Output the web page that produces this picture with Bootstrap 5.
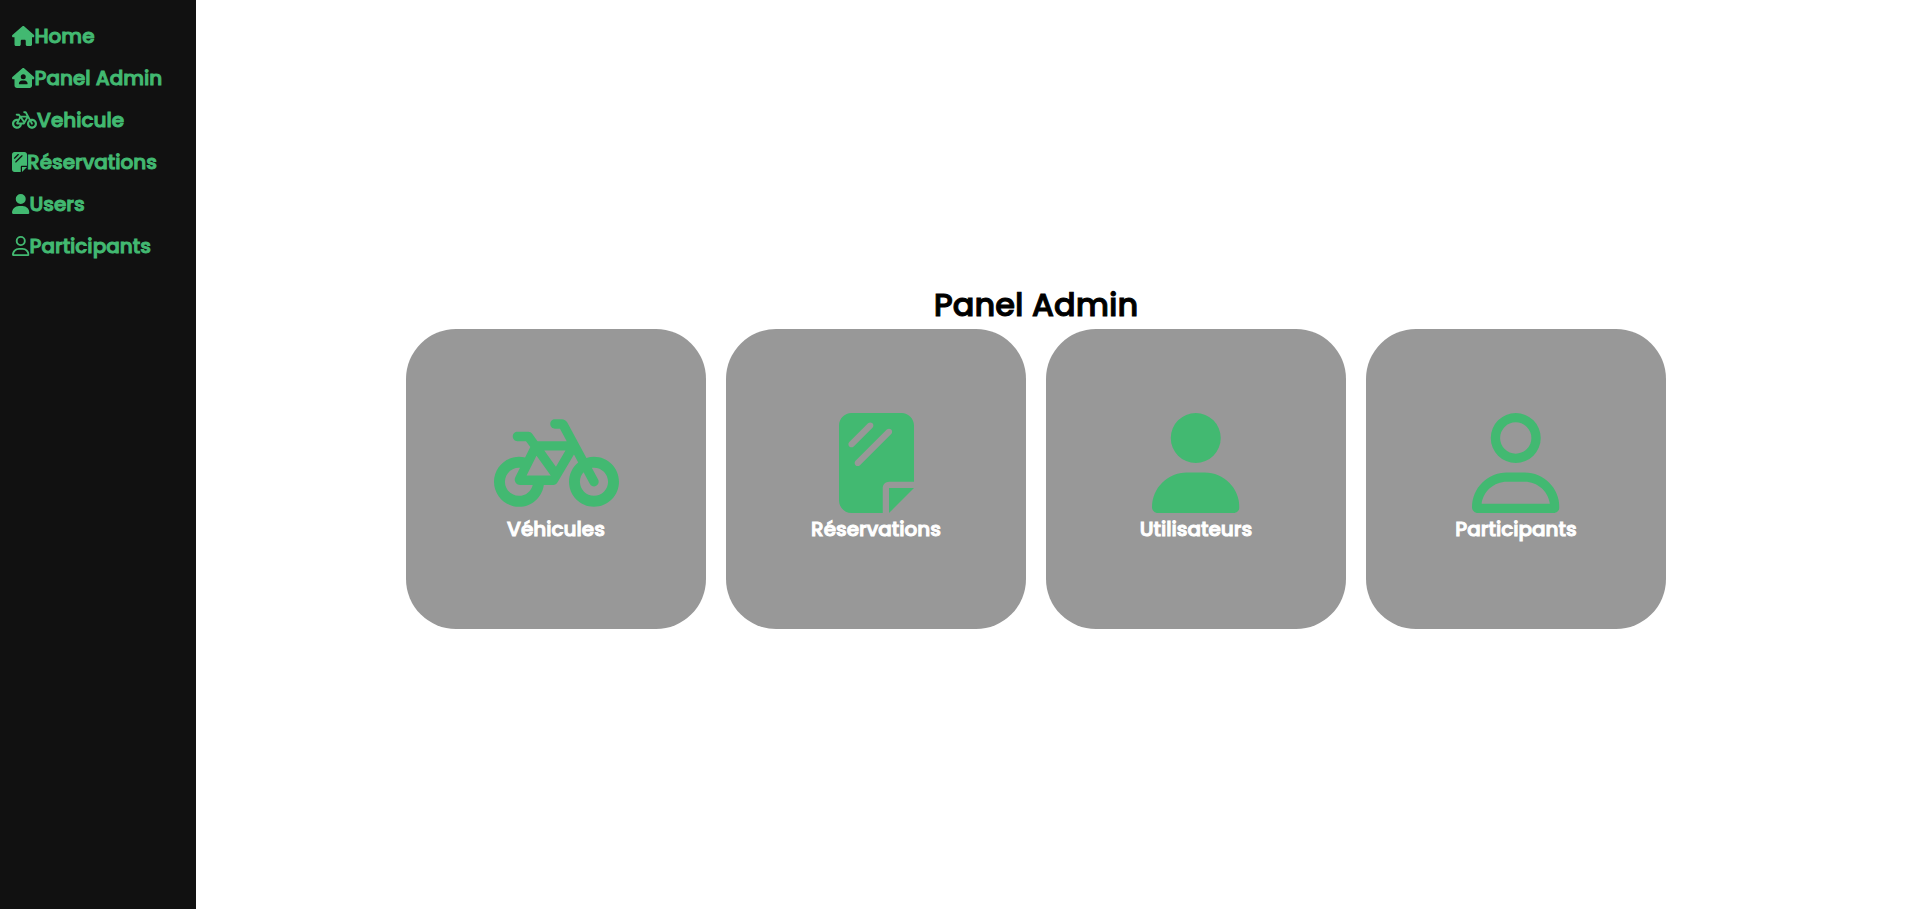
<!DOCTYPE html>
<html lang="fr">
<head>
<meta charset="utf-8">
<meta name="viewport" content="width=device-width, initial-scale=1">
<title>Panel Admin</title>
<link href="https://cdn.jsdelivr.net/npm/bootstrap@5.3.0/dist/css/bootstrap.min.css" rel="stylesheet">
<style>
  body { font-family: Poppins, Inter, sans-serif; background: #fff; color: #000; }
  .sidebar { width: 196px; background: #111; padding-top: 15px; }
  .sidebar a { color: #42b971; font-size: 20px; line-height: 30px; padding: 6px 12px; white-space: nowrap; }
  .sidebar a, .content h1, .tile { font-weight: 500; -webkit-text-stroke: 1px currentColor; }
  .glyph { fill: #42b971; height: 1em; flex: none; }
  .content { padding-right: 34px; }
  .content h1 { font-size: 32px; line-height: 48px; }
  .tiles { gap: 20px; }
  .tile { width: 300px; height: 300px; border-radius: 50px; background: #989898; color: #fff; font-size: 20px; line-height: 32px; }
  .tile .glyph { height: 100px; }
</style>
</head>
<body>
<svg class="d-none" aria-hidden="true">
  <symbol id="house" viewBox="0 0 576 512"><path d="M575.8 255.5c0 18-15 32.1-32 32.1h-32l.7 160.2c0 2.7-.2 5.4-.5 8.1V472c0 22.1-17.9 40-40 40H456c-1.1 0-2.2 0-3.3-.1c-1.4 .1-2.8 .1-4.2 .1H416 392c-22.1 0-40-17.9-40-40V448 384c0-17.7-14.3-32-32-32H256c-17.7 0-32 14.3-32 32v64 24c0 22.1-17.9 40-40 40H160 128.1c-1.5 0-3-.1-4.5-.2c-1.2 .1-2.4 .2-3.6 .2H104c-22.1 0-40-17.9-40-40V360c0-.9 0-1.9 .1-2.8V287.6H32c-18 0-32-14-32-32.1c0-9 3-17 10-24L266.4 8c7-7 15-8 22-8s15 2 21 7L564.8 231.5c8 7 12 15 11 24z"/></symbol>
  <symbol id="house-user" viewBox="0 0 576 512"><path d="M543.8 287.6c17 0 32-14 32-32.1c1-9-3-17-11-24L309.5 7c-6-5-14-7-21-7s-15 1-22 8L10 231.5c-7 7-10 15-10 24c0 18 14 32.1 32 32.1h32V448c0 35.3 28.7 64 64 64H448.5c35.5 0 64.2-28.8 64-64.3l-.7-160.2h32zM288 160a64 64 0 1 1 0 128 64 64 0 1 1 0-128zM176 400c0-44.2 35.8-80 80-80h64c44.2 0 80 35.8 80 80c0 8.8-7.2 16-16 16H192c-8.8 0-16-7.2-16-16z" fill-rule="evenodd"/></symbol>
  <symbol id="bicycle" viewBox="0 0 640 512"><path d="M312 32c-13.3 0-24 10.7-24 24s10.7 24 24 24h25.7l34.6 64H222.9l-27.4-38C191 99.7 183.7 96 176 96H120c-13.3 0-24 10.7-24 24s10.7 24 24 24h43.7l22.1 30.7-26.6 53.1c-10-2.5-20.5-3.8-31.2-3.8C57.3 224 0 281.3 0 352s57.3 128 128 128c65.3 0 119.1-48.9 127-112h49c8.5 0 16.3-4.5 20.7-11.8l84.8-143.5 21.7 40.1C402.4 276.3 384 312 384 352c0 70.7 57.3 128 128 128s128-57.3 128-128s-57.3-128-128-128c-13.5 0-26.5 2.1-38.7 6L375.4 48.8C369.8 38.4 359 32 347.2 32H312zM458.6 303.7l32.3 59.7c6.3 11.7 20.9 16 32.5 9.7s16-20.9 9.7-32.5l-32.3-59.7c3.6-.6 7.4-.9 11.2-.9c39.8 0 72 32.2 72 72s-32.2 72-72 72s-72-32.2-72-72c0-18.6 7-35.5 18.6-48.3zM133.2 368h65c-7.3 32.1-36 56-70.2 56c-39.8 0-72-32.2-72-72s32.2-72 72-72c1.7 0 3.4 .1 5.1 .2l-24.2 48.5c-9 18.1 4.1 39.4 24.3 39.4zm33.7-48l50.7-101.3 72.9 101.2-.1 .1H166.8zm90.6-128H365.9L317 274.8 257.4 192z" fill-rule="evenodd"/></symbol>
  <symbol id="sheet" viewBox="0 0 384 512"><path fill-rule="evenodd" d="M0 64C0 28.7 28.7 0 64 0H320c35.3 0 64 28.7 64 64V352H256c-17.7 0-32 14.3-32 32V512H64c-35.3 0-64-28.7-64-64zM384 384L256 512V384zM171.3 75.3l-96 96c-6.2 6.2-16.4 6.2-22.6 0s-6.2-16.4 0-22.6l96-96c6.2-6.2 16.4-6.2 22.6 0s6.2 16.4 0 22.6zm96 32l-160 160c-6.2 6.2-16.4 6.2-22.6 0s-6.2-16.4 0-22.6l160-160c6.2-6.2 16.4-6.2 22.6 0s6.2 16.4 0 22.6z"/></symbol>
  <symbol id="user" viewBox="0 0 448 512"><path d="M224 256A128 128 0 1 0 224 0a128 128 0 1 0 0 256zm-45.7 48C79.8 304 0 383.8 0 482.3C0 498.7 13.3 512 29.7 512H418.3c16.4 0 29.7-13.3 29.7-29.7C448 383.8 368.2 304 269.7 304H178.3z"/></symbol>
  <symbol id="user-outline" viewBox="0 0 448 512"><path fill-rule="evenodd" d="M304 128a80 80 0 1 0 -160 0 80 80 0 1 0 160 0zM96 128a128 128 0 1 1 256 0A128 128 0 1 1 96 128zM49.3 464H398.7c-8.9-63.3-63.3-112-129-112H178.3c-65.7 0-120.1 48.7-129 112zM0 482.3C0 383.8 79.8 304 178.3 304h91.4C368.2 304 448 383.8 448 482.3c0 16.4-13.3 29.7-29.7 29.7H29.7C13.3 512 0 498.7 0 482.3z"/></symbol>
</svg>
<div class="d-flex min-vh-100">
  <nav class="sidebar nav flex-column flex-nowrap flex-shrink-0" aria-label="Navigation">
    <a class="d-flex align-items-center text-decoration-none" href="#"><svg class="glyph" viewBox="0 0 576 512"><use href="#house"/></svg>Home</a>
    <a class="d-flex align-items-center text-decoration-none" href="#"><svg class="glyph" viewBox="0 0 576 512"><use href="#house-user"/></svg>Panel Admin</a>
    <a class="d-flex align-items-center text-decoration-none" href="#"><svg class="glyph" viewBox="0 0 640 512"><use href="#bicycle"/></svg>Vehicule</a>
    <a class="d-flex align-items-center text-decoration-none" href="#"><svg class="glyph" viewBox="0 0 384 512"><use href="#sheet"/></svg>Réservations</a>
    <a class="d-flex align-items-center text-decoration-none" href="#"><svg class="glyph" viewBox="0 0 448 512"><use href="#user"/></svg>Users</a>
    <a class="d-flex align-items-center text-decoration-none" href="#"><svg class="glyph" viewBox="0 0 448 512"><use href="#user-outline"/></svg>Participants</a>
  </nav>
  <main class="content flex-grow-1 d-flex flex-column align-items-center justify-content-center">
    <h1 class="m-0">Panel Admin</h1>
    <div class="tiles d-flex flex-wrap justify-content-center">
      <a class="tile d-flex flex-column align-items-center justify-content-center text-decoration-none" href="#"><svg class="glyph" viewBox="0 0 640 512"><use href="#bicycle"/></svg>Véhicules</a>
      <a class="tile d-flex flex-column align-items-center justify-content-center text-decoration-none" href="#"><svg class="glyph" viewBox="0 0 384 512"><use href="#sheet"/></svg>Réservations</a>
      <a class="tile d-flex flex-column align-items-center justify-content-center text-decoration-none" href="#"><svg class="glyph" viewBox="0 0 448 512"><use href="#user"/></svg>Utilisateurs</a>
      <a class="tile d-flex flex-column align-items-center justify-content-center text-decoration-none" href="#"><svg class="glyph" viewBox="0 0 448 512"><use href="#user-outline"/></svg>Participants</a>
    </div>
  </main>
</div>
<script src="https://cdn.jsdelivr.net/npm/bootstrap@5.3.0/dist/js/bootstrap.bundle.min.js"></script>
</body>
</html>
